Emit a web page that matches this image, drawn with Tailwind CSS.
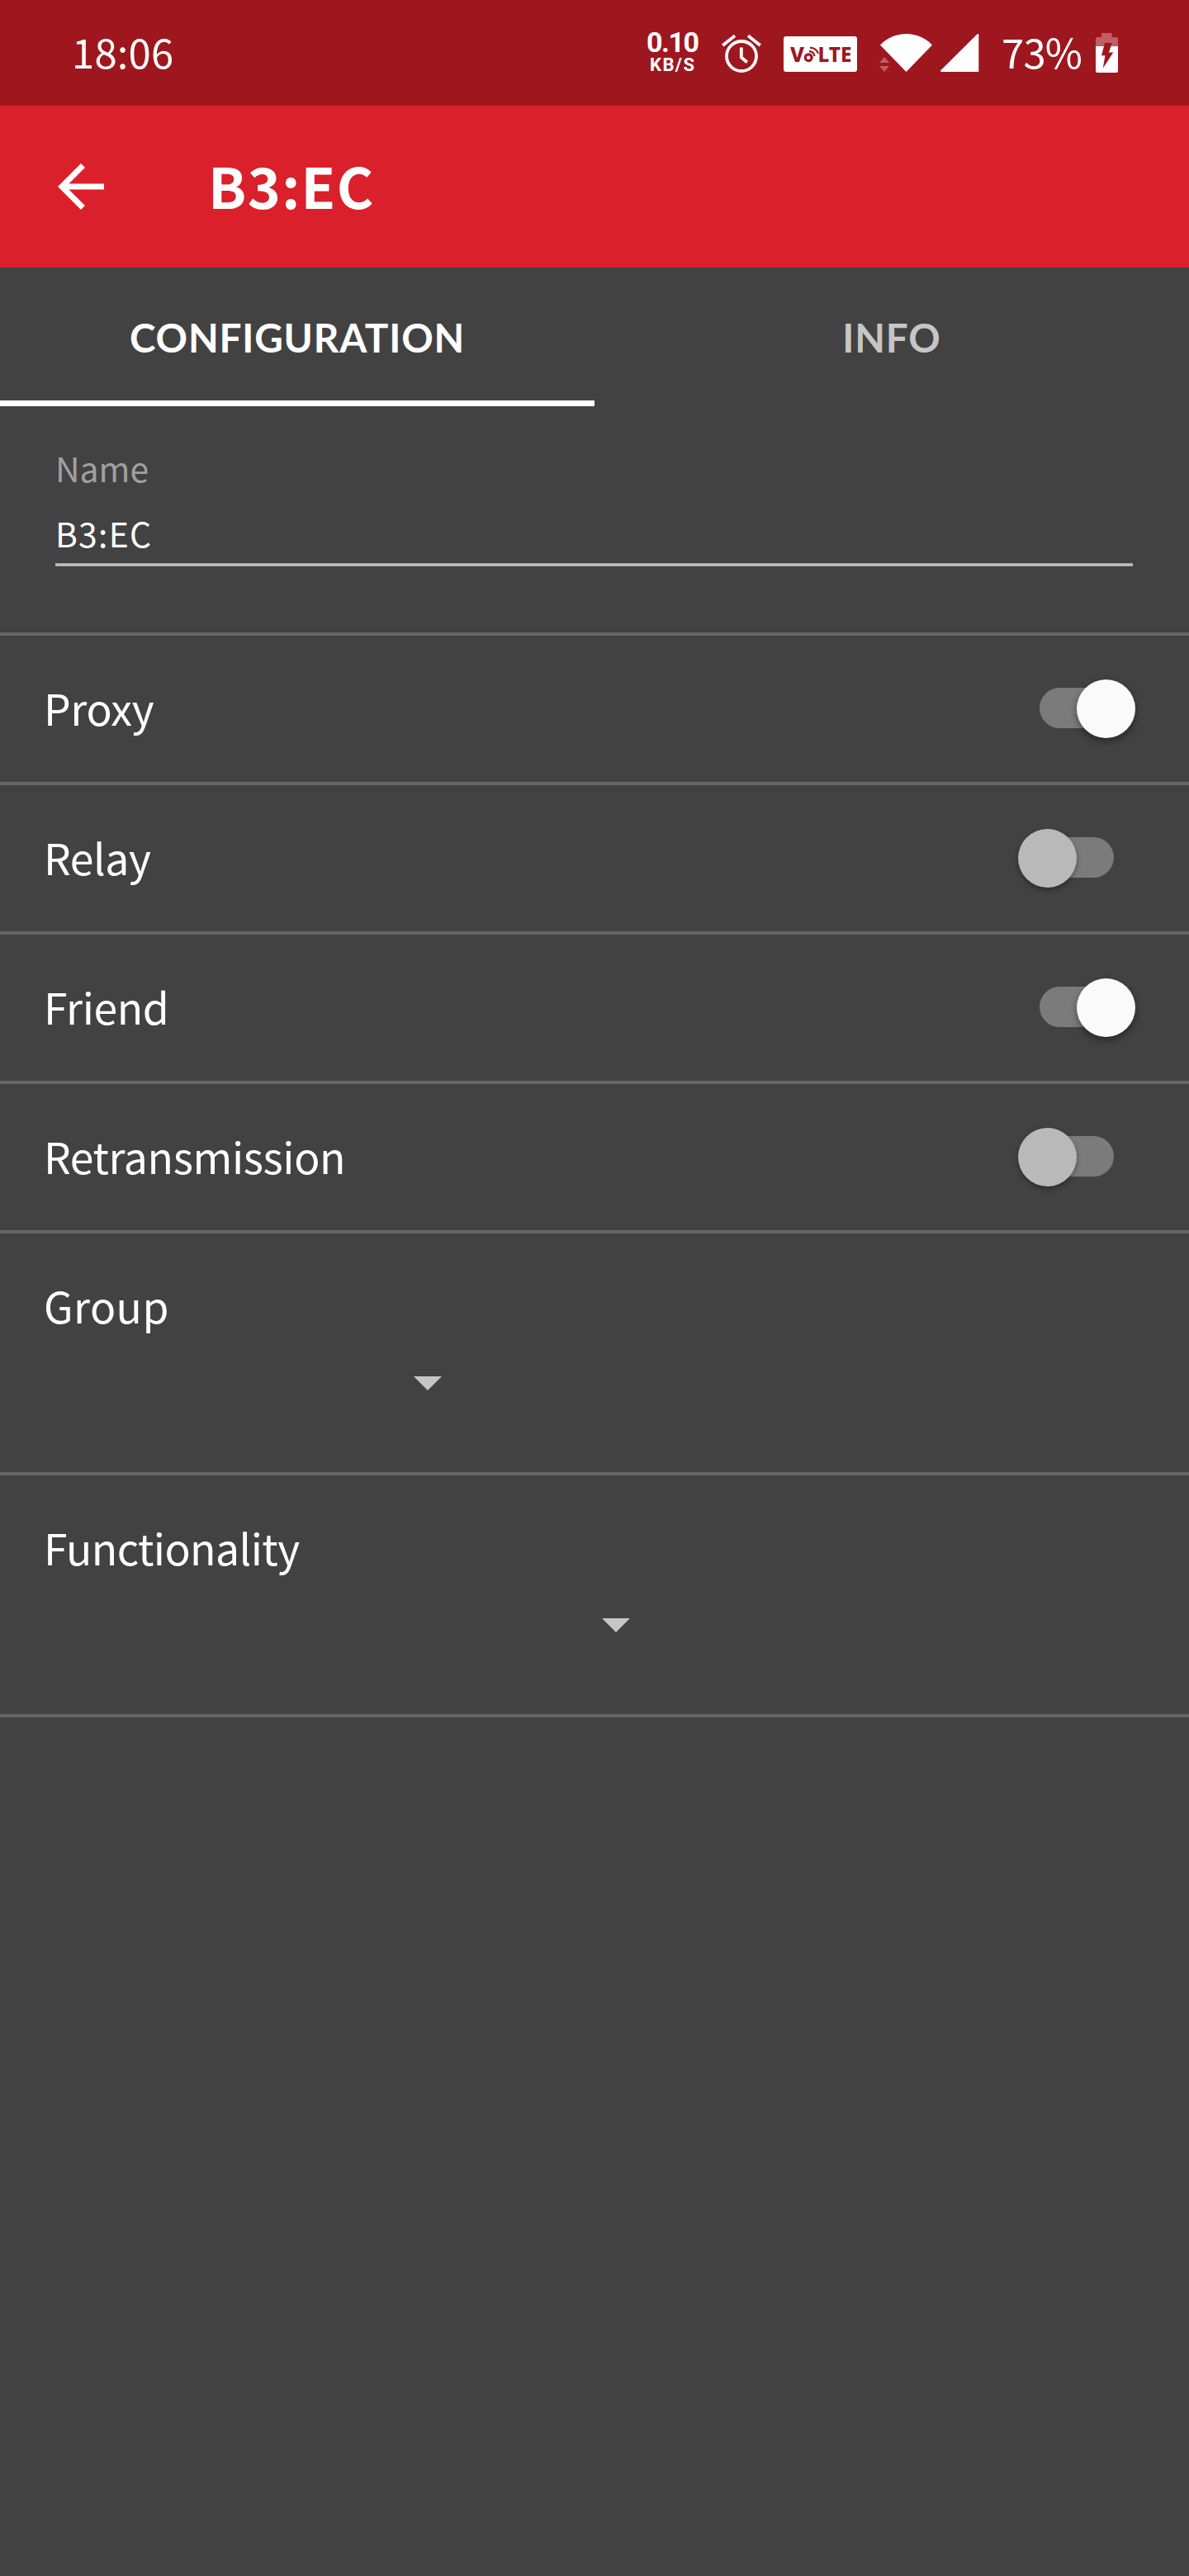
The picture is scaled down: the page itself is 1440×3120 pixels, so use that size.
<!DOCTYPE html>
<html lang="en">
<head>
<meta charset="utf-8">
<title>B3:EC</title>
<script src="https://cdn.jsdelivr.net/npm/@tailwindcss/browser@4"></script>
</head>
<body class="bg-[#424242] text-white font-['Noto_Sans_CJK_SC',sans-serif]">
<div class="w-[1440px] h-[3120px] overflow-hidden flex flex-col">

  <!-- Status bar -->
  <div class="h-[128px] shrink-0 bg-[#9e171f] flex items-center pl-[87px] pr-[86px]">
    <span class="text-[49px] leading-[60px] tracking-[0.2px] pb-[5px]">18:06</span>
    <div class="ml-auto flex items-center h-full">
      <svg class="h-[128px] w-[64px]" viewBox="783 0 64 128" fill="#fff" font-family="Roboto" font-weight="700">
        <text x="783" y="63" font-size="34" textLength="64">0.10</text>
        <text x="787" y="86" font-size="22" textLength="54">KB/S</text>
      </svg>
      <svg class="h-[128px] w-[50px] ml-[26px]" viewBox="873 0 50 128" fill="none" stroke="#fff" stroke-width="3.8">
        <circle cx="898" cy="68" r="18"/>
        <path d="M897.8 57.5V69.5L904.8 75.500M875.300 55L890 43.300M906 43.300L920.700 55"/>
      </svg>
      <svg class="h-[128px] w-[90px] ml-[26px]" viewBox="949 0 90 128" font-family="Noto Sans" font-weight="800">
        <rect x="949" y="44" width="89" height="43" rx="3" fill="#fff"/>
        <g fill="#9e171f">
          <text x="957" y="75" font-size="25.500" textLength="17" lengthAdjust="spacingAndGlyphs">V</text>
          <text x="990.500" y="75" font-size="25.500" textLength="41" lengthAdjust="spacingAndGlyphs">LTE</text>
        </g>
        <g fill="none" stroke="#9e171f">
          <circle cx="979.200" cy="69.700" r="3.900" stroke-width="3.200"/>
          <path stroke-width="2.200" d="M980 62.200Q985.500 62.500 986.500 68M981 57.600Q988.500 58 991 64.800"/>
        </g>
      </svg>
      <svg class="h-[128px] w-[65px] ml-[25px]" viewBox="1064 0 65 128">
        <path fill="#fff" d="M1066 54.500A43.500 43.500 0 0 1 1129 54.500L1097.500 87Z"/>
        <path fill="#c05f65" d="M1071 69L1077 76H1065ZM1071 87L1077 80H1065Z"/>
      </svg>
      <svg class="h-[128px] w-[47px] ml-[10px]" viewBox="1139 0 47 128" fill="#fff" stroke="#fff" stroke-width="2" stroke-linejoin="round">
        <path d="M1140 86L1184.300 42V86Z"/>
      </svg>
      <span class="ml-[27px] w-[114px] text-[49px] leading-[60px] tracking-[-0.8px] pb-[5px]">73%</span>
      <svg class="h-[128px] w-[27px]" viewBox="1327 0 27 128">
        <path fill="#bf5e64" d="M1334 40H1346.500V45H1352Q1354 45 1354 47V56H1327V47Q1327 45 1329 45H1334Z"/>
        <path fill="#fff" d="M1327 56H1354V86Q1354 88 1352 88H1329Q1327 88 1327 86Z"/>
        <path fill="#9e171f" d="M1338 52H1346.700L1343 63.500H1348.300L1335.700 82.700L1338.500 67.300H1334Z"/>
      </svg>
    </div>
  </div>

  <!-- App bar -->
  <header class="h-[196px] shrink-0 bg-[#da202a] flex items-center pl-14">
    <svg class="size-[84px]" viewBox="0 0 24 24" fill="#fff"><path d="M20 11H7.830l5.590-5.590L12 4l-8 8 8 8 1.410-1.410L7.830 13H20v-2z"/></svg>
    <h1 class="ml-[112px] text-[68px] leading-[80px] pb-[5px] font-bold tracking-[1.35px]">B3:EC</h1>
  </header>

  <!-- Tabs -->
  <nav class="h-[168px] shrink-0 grid grid-cols-2 text-center font-[Lato,sans-serif] text-[47.7px] leading-[60px] font-bold tracking-[0.8px]">
    <div class="border-b-[7px] border-white flex items-center justify-center pt-2">CONFIGURATION</div>
    <div class="border-b-[7px] border-transparent flex items-center justify-center pt-2 text-[#c6c6c6]">INFO</div>
  </nav>

  <!-- Name field -->
  <section class="h-[278px] shrink-0 pt-[45px] px-[67px] border-b-4 border-[#666] text-[40.9px] leading-[60px]">
    <div class="text-[#a0a0a0]">Name</div>
    <div class="mt-[19px] tracking-[1.25px]">B3:EC</div>
    <div class="mt-[6px] mr-px h-1 bg-[#c1c1c1] border-y border-[#a0a0a0]"></div>
  </section>

  <!-- Feature switches -->
  <section class="shrink-0 text-[51.7px] leading-[70px] tracking-[-0.4px]">
    <div class="h-[181px] border-b-4 border-[#666] flex items-center justify-between pl-[53px] pr-[65px]">
      <span class="pb-1">Proxy</span>
      <div class="relative w-[142px] h-[71px] pt-[10px] pl-[26px]">
        <div class="w-[90px] h-[49px] rounded-full bg-[#7b7b7b]"></div>
        <div class="absolute right-0 top-0 size-[71px] rounded-full bg-[#fafafa] shadow-[0_4px_8px_rgba(0,0,0,0.4)]"></div>
      </div>
    </div>
    <div class="h-[181px] border-b-4 border-[#666] flex items-center justify-between pl-[53px] pr-[65px]">
      <span class="pb-1">Relay</span>
      <div class="relative w-[142px] h-[71px] pt-[10px] pl-[26px]">
        <div class="w-[90px] h-[49px] rounded-full bg-[#7b7b7b]"></div>
        <div class="absolute left-0 top-0 size-[71px] rounded-full bg-[#b9b9b9] shadow-[0_3px_6px_rgba(0,0,0,0.35)]"></div>
      </div>
    </div>
    <div class="h-[181px] border-b-4 border-[#666] flex items-center justify-between pl-[53px] pr-[65px]">
      <span class="pb-1">Friend</span>
      <div class="relative w-[142px] h-[71px] pt-[10px] pl-[26px]">
        <div class="w-[90px] h-[49px] rounded-full bg-[#7b7b7b]"></div>
        <div class="absolute right-0 top-0 size-[71px] rounded-full bg-[#fafafa] shadow-[0_4px_8px_rgba(0,0,0,0.4)]"></div>
      </div>
    </div>
    <div class="h-[181px] border-b-4 border-[#666] flex items-center justify-between pl-[53px] pr-[65px]">
      <span class="pb-1">Retransmission</span>
      <div class="relative w-[142px] h-[71px] pt-[10px] pl-[26px]">
        <div class="w-[90px] h-[49px] rounded-full bg-[#7b7b7b]"></div>
        <div class="absolute left-0 top-0 size-[71px] rounded-full bg-[#b9b9b9] shadow-[0_3px_6px_rgba(0,0,0,0.35)]"></div>
      </div>
    </div>
  </section>

  <!-- Dropdowns -->
  <section class="shrink-0 text-[51.7px] leading-[173px]">
    <div class="h-[293px] border-b-4 border-[#666] pl-[53px]">
      <div class="tracking-[0.4px]">Group</div>
      <svg class="ml-[448px] w-[34px] h-[17px]" viewBox="0 0 34 17" fill="#c6c6c6"><path d="M0 0H34L17 17Z"/></svg>
    </div>
    <div class="h-[293px] border-b-4 border-[#666] pl-[53px]">
      <div class="tracking-[-0.6px]">Functionality</div>
      <svg class="ml-[676px] w-[34px] h-[17px]" viewBox="0 0 34 17" fill="#c6c6c6"><path d="M0 0H34L17 17Z"/></svg>
    </div>
  </section>
</div>
</body>
</html>
